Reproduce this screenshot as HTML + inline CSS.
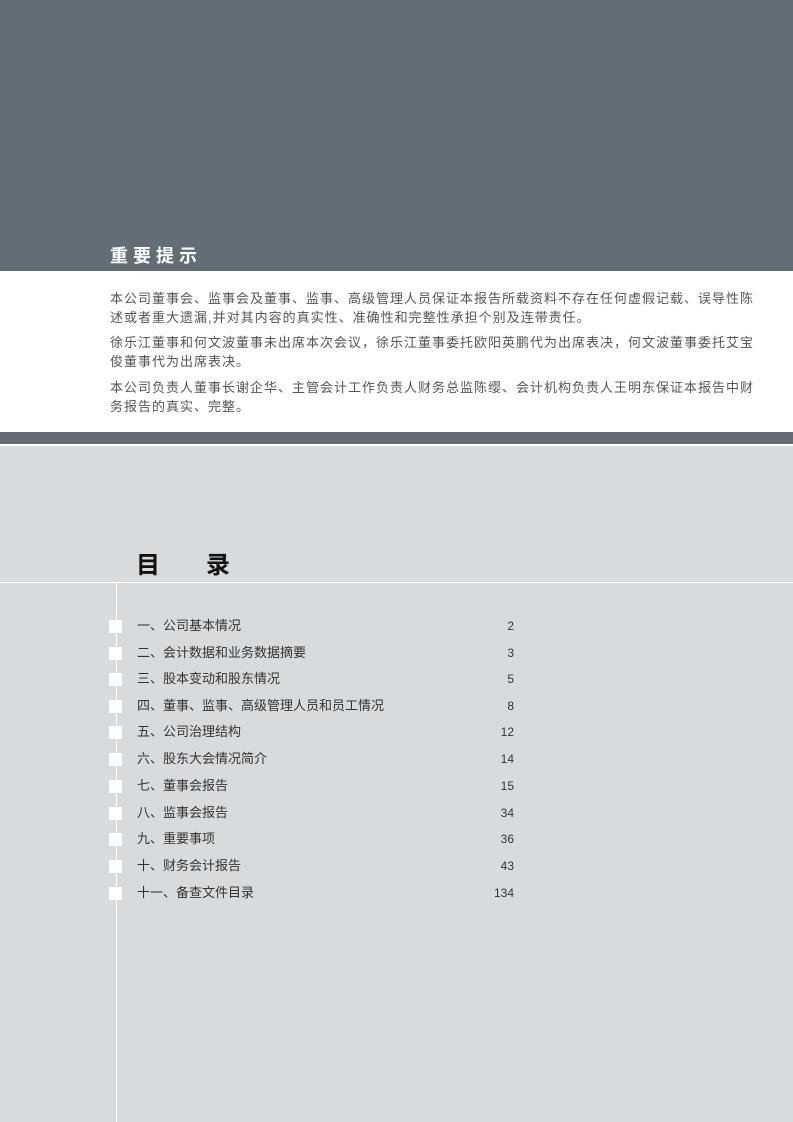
<!DOCTYPE html>
<html><head><meta charset="utf-8"><style>
body{margin:0;width:793px;height:1122px;position:relative;overflow:hidden;background:#fff;font-family:"Liberation Sans","Noto Sans CJK SC",sans-serif}
.top{position:absolute;left:0;top:0;width:793px;height:271px;background:#626d78}
.title{position:absolute;left:110px;top:245px;color:#fff;font-size:18px;letter-spacing:5px;line-height:22px;font-weight:bold}
.p{position:absolute;left:110px;font-size:13px;line-height:19px;color:#555;letter-spacing:1px;white-space:nowrap}
.band{position:absolute;left:0;top:432px;width:793px;height:12px;background:#626d78}
.low{position:absolute;left:0;top:446px;width:793px;height:676px;background:#d8dbde}
.hl{position:absolute;left:0;top:582px;width:793px;height:1px;background:#fff}
.vl{position:absolute;left:116px;top:582px;width:1px;height:540px;background:#fff}
.mu{position:absolute;left:136px;top:552px;font-size:24px;color:#111;line-height:28px;font-weight:bold}
.r{position:absolute;left:0;width:793px;height:18px;font-size:13px;color:#333;line-height:18px}
.r .sq{position:absolute;left:109px;top:3px;width:13px;height:13px;background:#fff}
.r .t{position:absolute;left:137px;top:0}
.r .n{position:absolute;right:279px;top:0;font-size:12px}
</style></head><body>
<div class="top"></div>
<div class="title">重要提示</div>
<div class="p" style="top:289px">本公司董事会、监事会及董事、监事、高级管理人员保证本报告所载资料不存在任何虚假记载、误导性陈<br>述或者重大遗漏,并对其内容的真实性、准确性和完整性承担个别及连带责任。</div>
<div class="p" style="top:333px">徐乐江董事和何文波董事未出席本次会议，徐乐江董事委托欧阳英鹏代为出席表决，何文波董事委托艾宝<br>俊董事代为出席表决。</div>
<div class="p" style="top:378px">本公司负责人董事长谢企华、主管会计工作负责人财务总监陈缨、会计机构负责人王明东保证本报告中财<br>务报告的真实、完整。</div>
<div class="band"></div>
<div class="low"></div>
<div class="hl"></div>
<div class="vl"></div>
<div class="mu">目<span style="margin-left:46px">录</span></div>
<div class="r" style="top:617px"><div class="sq"></div><div class="t">一、公司基本情况</div><div class="n">2</div></div>
<div class="r" style="top:644px"><div class="sq"></div><div class="t">二、会计数据和业务数据摘要</div><div class="n">3</div></div>
<div class="r" style="top:670px"><div class="sq"></div><div class="t">三、股本变动和股东情况</div><div class="n">5</div></div>
<div class="r" style="top:697px"><div class="sq"></div><div class="t">四、董事、监事、高级管理人员和员工情况</div><div class="n">8</div></div>
<div class="r" style="top:723px"><div class="sq"></div><div class="t">五、公司治理结构</div><div class="n">12</div></div>
<div class="r" style="top:750px"><div class="sq"></div><div class="t">六、股东大会情况简介</div><div class="n">14</div></div>
<div class="r" style="top:777px"><div class="sq"></div><div class="t">七、董事会报告</div><div class="n">15</div></div>
<div class="r" style="top:804px"><div class="sq"></div><div class="t">八、监事会报告</div><div class="n">34</div></div>
<div class="r" style="top:830px"><div class="sq"></div><div class="t">九、重要事项</div><div class="n">36</div></div>
<div class="r" style="top:857px"><div class="sq"></div><div class="t">十、财务会计报告</div><div class="n">43</div></div>
<div class="r" style="top:884px"><div class="sq"></div><div class="t">十一、备查文件目录</div><div class="n">134</div></div>
</body></html>
